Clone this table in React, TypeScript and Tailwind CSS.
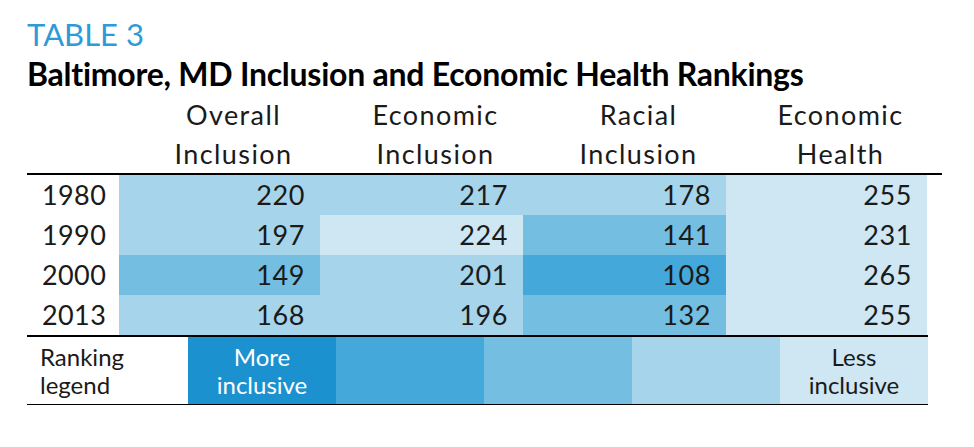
const LIGHTEST = "bg-[#cfe6f3]";
const LIGHT = "bg-[#a6d4eb]";
const MEDIUM = "bg-[#74bee2]";
const DARK = "bg-[#45a8db]";
const DARKEST = "bg-[#1c91d0]";

type Cell = { v: number; bg: string };

const ROWS: { year: string; cells: Cell[] }[] = [
  {
    year: "1980",
    cells: [
      { v: 220, bg: LIGHT },
      { v: 217, bg: LIGHT },
      { v: 178, bg: LIGHT },
      { v: 255, bg: LIGHTEST },
    ],
  },
  {
    year: "1990",
    cells: [
      { v: 197, bg: LIGHT },
      { v: 224, bg: LIGHTEST },
      { v: 141, bg: MEDIUM },
      { v: 231, bg: LIGHTEST },
    ],
  },
  {
    year: "2000",
    cells: [
      { v: 149, bg: MEDIUM },
      { v: 201, bg: LIGHT },
      { v: 108, bg: DARK },
      { v: 265, bg: LIGHTEST },
    ],
  },
  {
    year: "2013",
    cells: [
      { v: 168, bg: LIGHT },
      { v: 196, bg: LIGHT },
      { v: 132, bg: MEDIUM },
      { v: 255, bg: LIGHTEST },
    ],
  },
];

const HEADERS = [
  ["Overall", "Inclusion"],
  ["Economic", "Inclusion"],
  ["Racial", "Inclusion"],
  ["Economic", "Health"],
];

const COLS = "grid grid-cols-[92px_201px_203px_203px_201px]";

export default function App() {
  return (
    <div
      className="w-[974px] h-[447px] bg-white pl-[27px] pt-[19px] text-[#1a1a1a]"
      style={{ fontFamily: "Lato, 'Open Sans', sans-serif" }}
    >
      {/* Title */}
      <div className="text-[31px] leading-[31px] text-[#2e9bd6]">TABLE 3</div>
      <div className="mt-[8px] text-[32px] leading-[31px] font-bold tracking-[-0.25px] text-black">
        Baltimore, MD Inclusion and Economic Health Rankings
      </div>

      {/* Column headers */}
      <div className="mt-[6px] w-[915px] border-b-2 border-black">
        <div className={COLS}>
          <div />
          {HEADERS.map(([a, b], i) => (
            <div
              key={i}
              className="pl-7 text-center text-[27px] leading-[39px] tracking-[1.4px]"
            >
              <div>{a}</div>
              <div>{b}</div>
            </div>
          ))}
        </div>
      </div>

      {/* Data rows */}
      <div className="w-[901px] border-b-2 border-black">
        {ROWS.map((row) => (
          <div key={row.year} className={COLS}>
            <div className="h-[40px] pl-[15px] text-[27px] leading-[40px] tracking-[0.4px]">
              {row.year}
            </div>
            {row.cells.map((c, i) => (
              <div
                key={i}
                className={`h-[40px] pr-[15px] text-right text-[27px] leading-[40px] tracking-[0.6px] ${c.bg}`}
              >
                {c.v}
              </div>
            ))}
          </div>
        ))}
      </div>

      {/* Legend */}
      <div className="flex w-[901px] h-[68px] border-b border-black text-[24px] leading-[28px]">
        <div className="w-[161px] pl-[13px] flex flex-col justify-center">
          <span>Ranking</span>
          <span>legend</span>
        </div>
        <div className={`w-[148px] ${DARKEST} flex flex-col justify-center items-center text-white`}>
          <span>More</span>
          <span>inclusive</span>
        </div>
        <div className={`w-[148px] ${DARK}`} />
        <div className={`w-[148px] ${MEDIUM}`} />
        <div className={`w-[148px] ${LIGHT}`} />
        <div className={`w-[148px] ${LIGHTEST} flex flex-col justify-center items-center`}>
          <span>Less</span>
          <span>inclusive</span>
        </div>
      </div>
    </div>
  );
}
